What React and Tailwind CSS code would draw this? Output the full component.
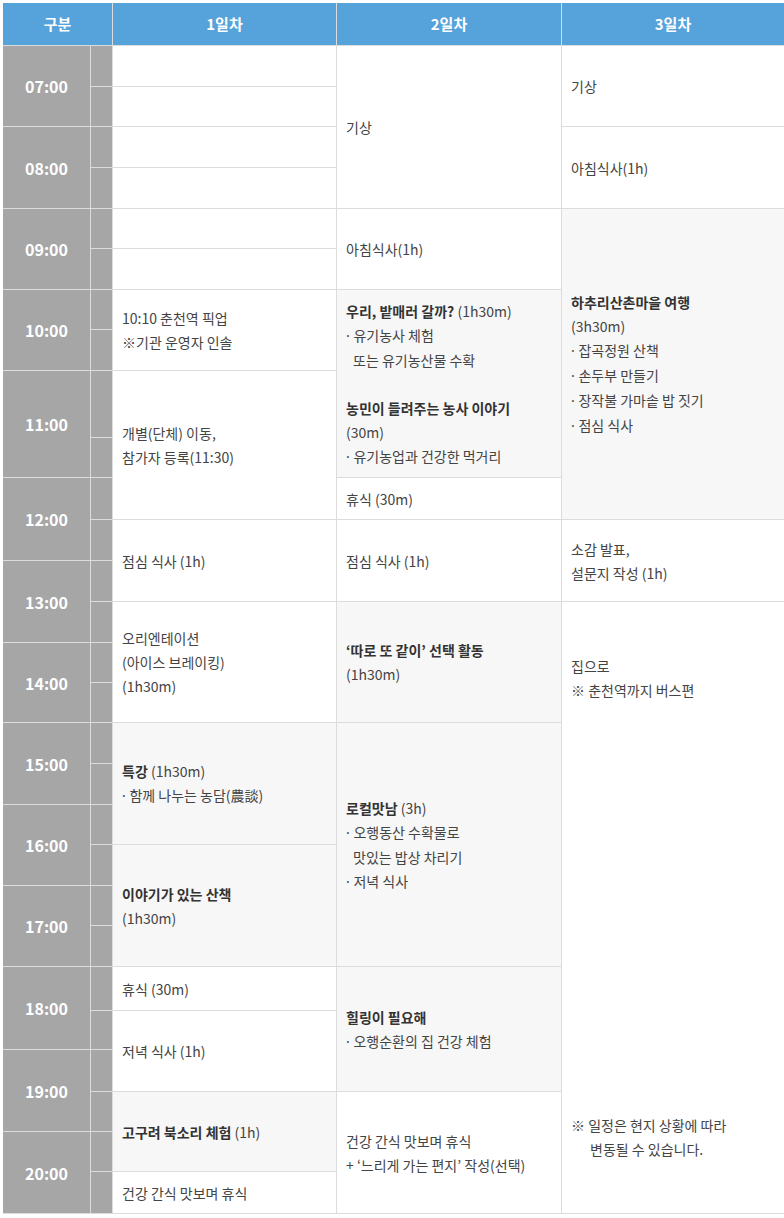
import React from "react";

const TIME_ROWS = [
  "row-start-2", "row-start-4", "row-start-6", "row-start-8", "row-start-10", "row-start-12", "row-start-14",
  "row-start-16", "row-start-18", "row-start-20", "row-start-22", "row-start-24", "row-start-26", "row-start-28",
];
const TIMES = ["07:00", "08:00", "09:00", "10:00", "11:00", "12:00", "13:00", "14:00", "15:00", "16:00", "17:00", "18:00", "19:00", "20:00"];
const SUB_ROWS = [
  "row-start-2", "row-start-3", "row-start-4", "row-start-5", "row-start-6", "row-start-7", "row-start-8",
  "row-start-9", "row-start-10", "row-start-11", "row-start-12", "row-start-13", "row-start-14", "row-start-15",
  "row-start-16", "row-start-17", "row-start-18", "row-start-19", "row-start-20", "row-start-21", "row-start-22",
  "row-start-23", "row-start-24", "row-start-25", "row-start-26", "row-start-27", "row-start-28", "row-start-29",
];

const B = ({ children }) => <b className="font-bold text-[#333]">{children}</b>;
const Ind = ({ children }) => <span className="block pl-[7px]">{children}</span>;
const L = ({ children }) => <span className="block">{children}</span>;
const Dot = () => <span className="font-['Noto_Sans',sans-serif]">· </span>;

const CELLS = [
  // day 1
  { pos: "col-start-3 row-start-2" },
  { pos: "col-start-3 row-start-3" },
  { pos: "col-start-3 row-start-4" },
  { pos: "col-start-3 row-start-5" },
  { pos: "col-start-3 row-start-6" },
  { pos: "col-start-3 row-start-7" },
  { pos: "col-start-3 row-start-8 row-span-2", body: <><L>10:10 춘천역 픽업</L><L>※기관 운영자 인솔</L></> },
  { pos: "col-start-3 row-start-10 row-span-3", body: <><L>개별(단체) 이동,</L><L>참가자 등록(11:30)</L></> },
  { pos: "col-start-3 row-start-13 row-span-2", body: <L>점심 식사 (1h)</L> },
  { pos: "col-start-3 row-start-15 row-span-3", body: <><L>오리엔테이션</L><L>(아이스 브레이킹)</L><L>(1h30m)</L></> },
  { pos: "col-start-3 row-start-18 row-span-3", gray: true, body: <><L><B>특강</B> (1h30m)</L><L><Dot />함께 나누는 농담(農談)</L></> },
  { pos: "col-start-3 row-start-21 row-span-3", gray: true, body: <><L><B>이야기가 있는 산책</B></L><L>(1h30m)</L></> },
  { pos: "col-start-3 row-start-24", body: <L>휴식 (30m)</L> },
  { pos: "col-start-3 row-start-25 row-span-2", body: <L>저녁 식사 (1h)</L> },
  { pos: "col-start-3 row-start-27 row-span-2", gray: true, body: <L><B>고구려 북소리 체험</B> (1h)</L> },
  { pos: "col-start-3 row-start-29", body: <L>건강 간식 맛보며 휴식</L> },
  // day 2
  { pos: "col-start-4 row-start-2 row-span-4", body: <L>기상</L> },
  { pos: "col-start-4 row-start-6 row-span-2", body: <L>아침식사(1h)</L> },
  {
    pos: "col-start-4 row-start-8 row-span-4", gray: true, body: <>
      <L><B>우리, 밭매러 갈까?</B> (1h30m)</L>
      <L><Dot />유기농사 체험</L>
      <Ind>또는 유기농산물 수확</Ind>
      <span className="block h-[24px]" />
      <L><B>농민이 들려주는 농사 이야기</B></L>
      <L>(30m)</L>
      <L><Dot />유기농업과 건강한 먹거리</L>
    </>
  },
  { pos: "col-start-4 row-start-12", body: <L>휴식 (30m)</L> },
  { pos: "col-start-4 row-start-13 row-span-2", body: <L>점심 식사 (1h)</L> },
  { pos: "col-start-4 row-start-15 row-span-3", gray: true, body: <><L><B>‘따로 또 같이’ 선택 활동</B></L><L>(1h30m)</L></> },
  { pos: "col-start-4 row-start-18 row-span-6", gray: true, body: <><L><B>로컬맛남</B> (3h)</L><L><Dot />오행동산 수확물로</L><Ind>맛있는 밥상 차리기</Ind><L><Dot />저녁 식사</L></> },
  { pos: "col-start-4 row-start-24 row-span-3", gray: true, body: <><L><B>힐링이 필요해</B></L><L><Dot />오행순환의 집 건강 체험</L></> },
  { pos: "col-start-4 row-start-27 row-span-3", body: <><L>건강 간식 맛보며 휴식</L><L>+ ‘느리게 가는 편지’ 작성(선택)</L></> },
  // day 3
  { pos: "col-start-5 row-start-2 row-span-2", body: <L>기상</L> },
  { pos: "col-start-5 row-start-4 row-span-2", body: <L>아침식사(1h)</L> },
  {
    pos: "col-start-5 row-start-6 row-span-7", gray: true, body: <>
      <L><B>하추리산촌마을 여행</B></L>
      <L>(3h30m)</L>
      <L><Dot />잡곡정원 산책</L>
      <L><Dot />손두부 만들기</L>
      <L><Dot />장작불 가마솥 밥 짓기</L>
      <L><Dot />점심 식사</L>
    </>
  },
  { pos: "col-start-5 row-start-13 row-span-2", body: <><L>소감 발표,</L><L>설문지 작성 (1h)</L></> },
];

export default function App() {
  return (
    <div className="bg-white min-h-[1218px] pt-[3px] pl-[3px] font-['Noto_Sans_CJK_KR','Noto_Sans',sans-serif]">
      <div className="grid w-[781px] gap-px bg-[#dcdcdc] border-b border-[#dcdcdc] grid-cols-[87px_21px_223px_224px_222px] grid-rows-[42px_40px_39px_40px_40px_39px_40px_39px_40px_66px_39px_41px_40px_40px_40px_39px_39px_40px_40px_39px_40px_39px_40px_43px_38px_41px_39px_39px_41px]">
        <div className="col-start-1 col-span-2 row-start-1 flex items-center justify-center bg-[#56a2da] text-white font-bold text-[15px]">구분</div>
        <div className="col-start-3 row-start-1 flex items-center justify-center bg-[#56a2da] text-white font-bold text-[15px]">1일차</div>
        <div className="col-start-4 row-start-1 flex items-center justify-center bg-[#56a2da] text-white font-bold text-[15px]">2일차</div>
        <div className="col-start-5 row-start-1 flex items-center justify-center bg-[#56a2da] text-white font-bold text-[15px]">3일차</div>

        {TIMES.map((t, i) => (
          <div key={t} className={`col-start-1 row-span-2 ${TIME_ROWS[i]} flex items-center justify-center bg-[#a6a6a6] text-white font-bold text-[16px]`}>
            {t}
          </div>
        ))}
        {SUB_ROWS.map((r) => (
          <div key={r} className={`col-start-2 ${r} bg-[#a6a6a6]`} />
        ))}

        {CELLS.map((c, i) => (
          <div
            key={i}
            className={`${c.pos} ${c.gray ? "bg-[#f7f7f7]" : "bg-white"} flex flex-col justify-center pl-[9px] text-[14px] leading-[24px] text-[#444]`}
          >
            {c.body}
          </div>
        ))}

        <div className="col-start-5 row-start-15 row-span-15 bg-white flex flex-col justify-between pl-[9px] pt-[52px] pb-[52px] text-[14px] leading-[24px] text-[#444]">
          <div>
            <L>집으로</L>
            <L>※ 춘천역까지 버스편</L>
          </div>
          <div>
            <L>※ 일정은 현지 상황에 따라</L>
            <span className="block pl-[19px]">변동될 수 있습니다.</span>
          </div>
        </div>
      </div>
    </div>
  );
}
